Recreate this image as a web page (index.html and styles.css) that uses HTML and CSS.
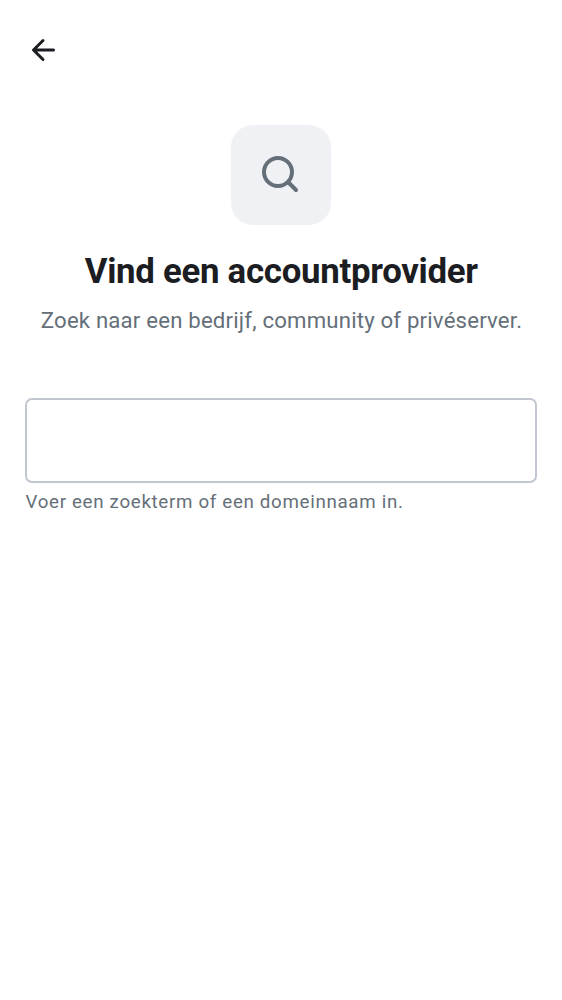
FILE: index.html
```html
<!DOCTYPE html>
<html lang="nl">
<head>
<meta charset="utf-8">
<title>Vind een accountprovider</title>
<link rel="stylesheet" href="styles.css">
</head>
<body>
<header class="topbar">
  <button class="back" aria-label="Terug">
    <svg class="back-icon" viewBox="0 0 24 24" fill="none" stroke="currentColor" stroke-width="3" stroke-linecap="round" stroke-linejoin="round"><path d="M22 12H2.500M11.500 2.500L2 12l9.500 9.500"/></svg>
  </button>
</header>
<main class="content">
  <div class="tile">
    <svg class="search-icon" viewBox="0 0 40 40" fill="none" stroke="currentColor" stroke-width="4" stroke-linecap="round"><circle cx="17" cy="17" r="14"/><path d="M27 27l8 8"/></svg>
  </div>
  <h1 class="title">Vind een accountprovider</h1>
  <p class="subtitle">Zoek naar een bedrijf, community of privéserver.</p>
  <input class="field" type="text" aria-label="Zoekterm">
  <p class="hint">Voer een zoekterm of een domeinnaam in.</p>
</main>
</body>
</html>
```
FILE: styles.css
```css
* { box-sizing: border-box; }
body { margin: 0; height: 1000px; background: #fff; color: #1b1d22; font-family: Roboto, sans-serif; }
.topbar { height: 100px; padding: 38px 31px; }
.back { display: block; padding: 0; border: 0; background: none; color: inherit; }
.back-icon { display: block; width: 25px; height: 24px; }
.content { display: flex; flex-direction: column; align-items: center; padding: 25px 25px 0; }
.tile { display: flex; align-items: center; justify-content: center; width: 100px; height: 100px; border-radius: 22px; background: #f0f1f5; color: #656f79; }
.search-icon { width: 40px; height: 40px; }
.title { margin: 24px 0 0; padding-left: .5px; font-size: 34.8px; line-height: 44px; font-weight: 700; letter-spacing: -.28px; white-space: nowrap; }
.subtitle { margin: 11px 0 0; padding-left: 1px; font-size: 22.2px; line-height: 32px; letter-spacing: .18px; color: #656f79; white-space: nowrap; }
.field { width: 512px; height: 85px; margin: 62px 0 0; border: 2px solid #c1c6d0; border-radius: 7px; background: #fff; }
.hint { align-self: flex-start; margin: 7px 0 0; padding-left: .5px; font-size: 18.75px; line-height: 25px; letter-spacing: .67px; color: #656f79; white-space: nowrap; }
```
